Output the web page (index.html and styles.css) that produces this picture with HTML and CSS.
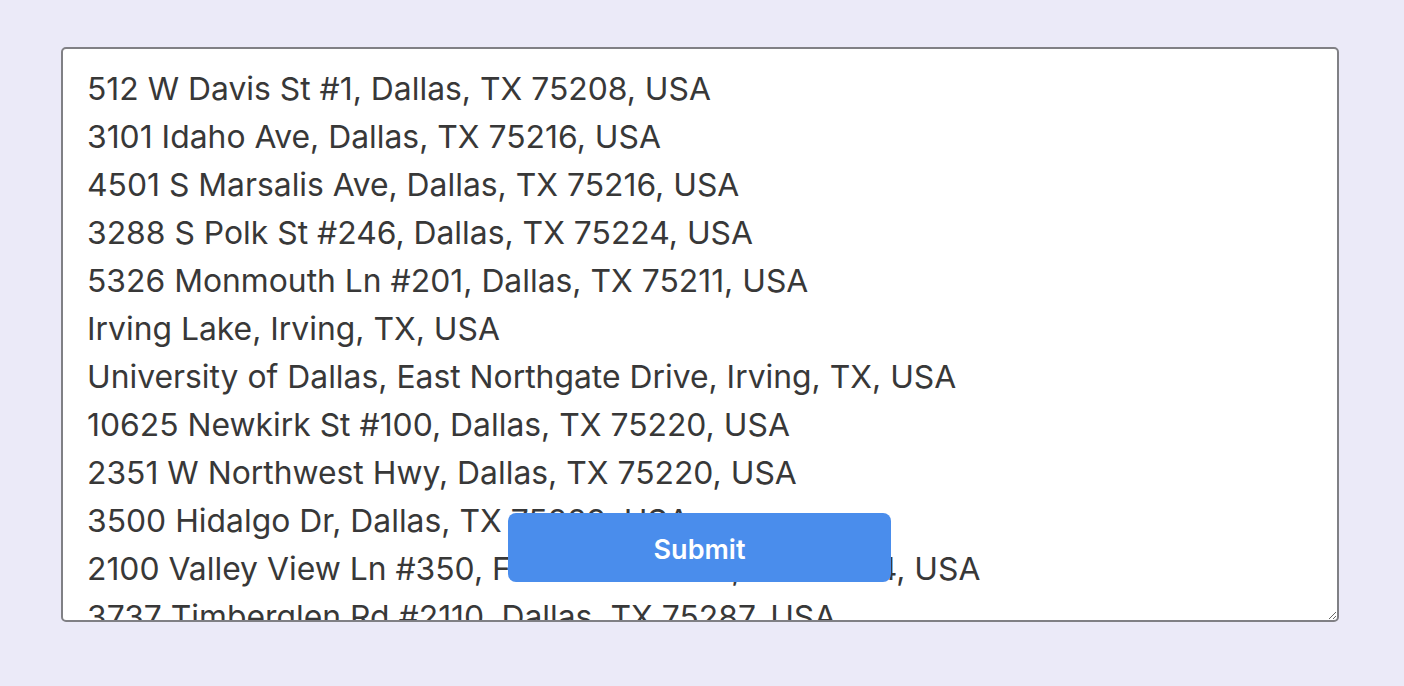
FILE: index.html
```html
<!DOCTYPE html>
<html>
<head>
<meta charset="utf-8">
<link rel="stylesheet" href="styles.css">
</head>
<body>
<form class="form">
<textarea class="addresses">512 W Davis St #1, Dallas, TX 75208, USA
3101 Idaho Ave, Dallas, TX 75216, USA
4501 S Marsalis Ave, Dallas, TX 75216, USA
3288 S Polk St #246, Dallas, TX 75224, USA
5326 Monmouth Ln #201, Dallas, TX 75211, USA
Irving Lake, Irving, TX, USA
University of Dallas, East Northgate Drive, Irving, TX, USA
10625 Newkirk St #100, Dallas, TX 75220, USA
2351 W Northwest Hwy, Dallas, TX 75220, USA
3500 Hidalgo Dr, Dallas, TX 75229, USA
2100 Valley View Ln #350, Farmers Branch, TX 75234, USA
3737 Timberglen Rd #2110, Dallas, TX 75287, USA
4100 Alpha Rd, Dallas, TX 75244, USA</textarea>
<button type="button" class="submit">Submit</button>
</form>
</body>
</html>
```

FILE: styles.css
```css
html, body {
  margin: 0;
  padding: 0;
  background: #ebeaf8;
}
body {
  padding: 47px 64px 0 61px;
  font-family: Inter, "Noto Sans", sans-serif;
}
.form {
  position: relative;
  width: 1278px;
}
.addresses {
  display: block;
  box-sizing: border-box;
  width: 1278px;
  height: 575px;
  margin: 0;
  padding: 16px 24px;
  border: 2px solid #808085;
  border-radius: 5px;
  background: #fff;
  color: #383838;
  font-family: Inter, "Noto Sans", sans-serif;
  font-size: 31.85px;
  line-height: 48px;
  overflow: hidden;
  outline: none;
}
.submit {
  position: absolute;
  left: 447px;
  top: 466px;
  width: 383px;
  height: 69px;
  padding: 4px 0 0;
  border: none;
  border-radius: 8px;
  background: #4a8dec;
  color: #fff;
  font-family: Inter, "Noto Sans", sans-serif;
  font-weight: 600;
  font-size: 27px;
}
```
